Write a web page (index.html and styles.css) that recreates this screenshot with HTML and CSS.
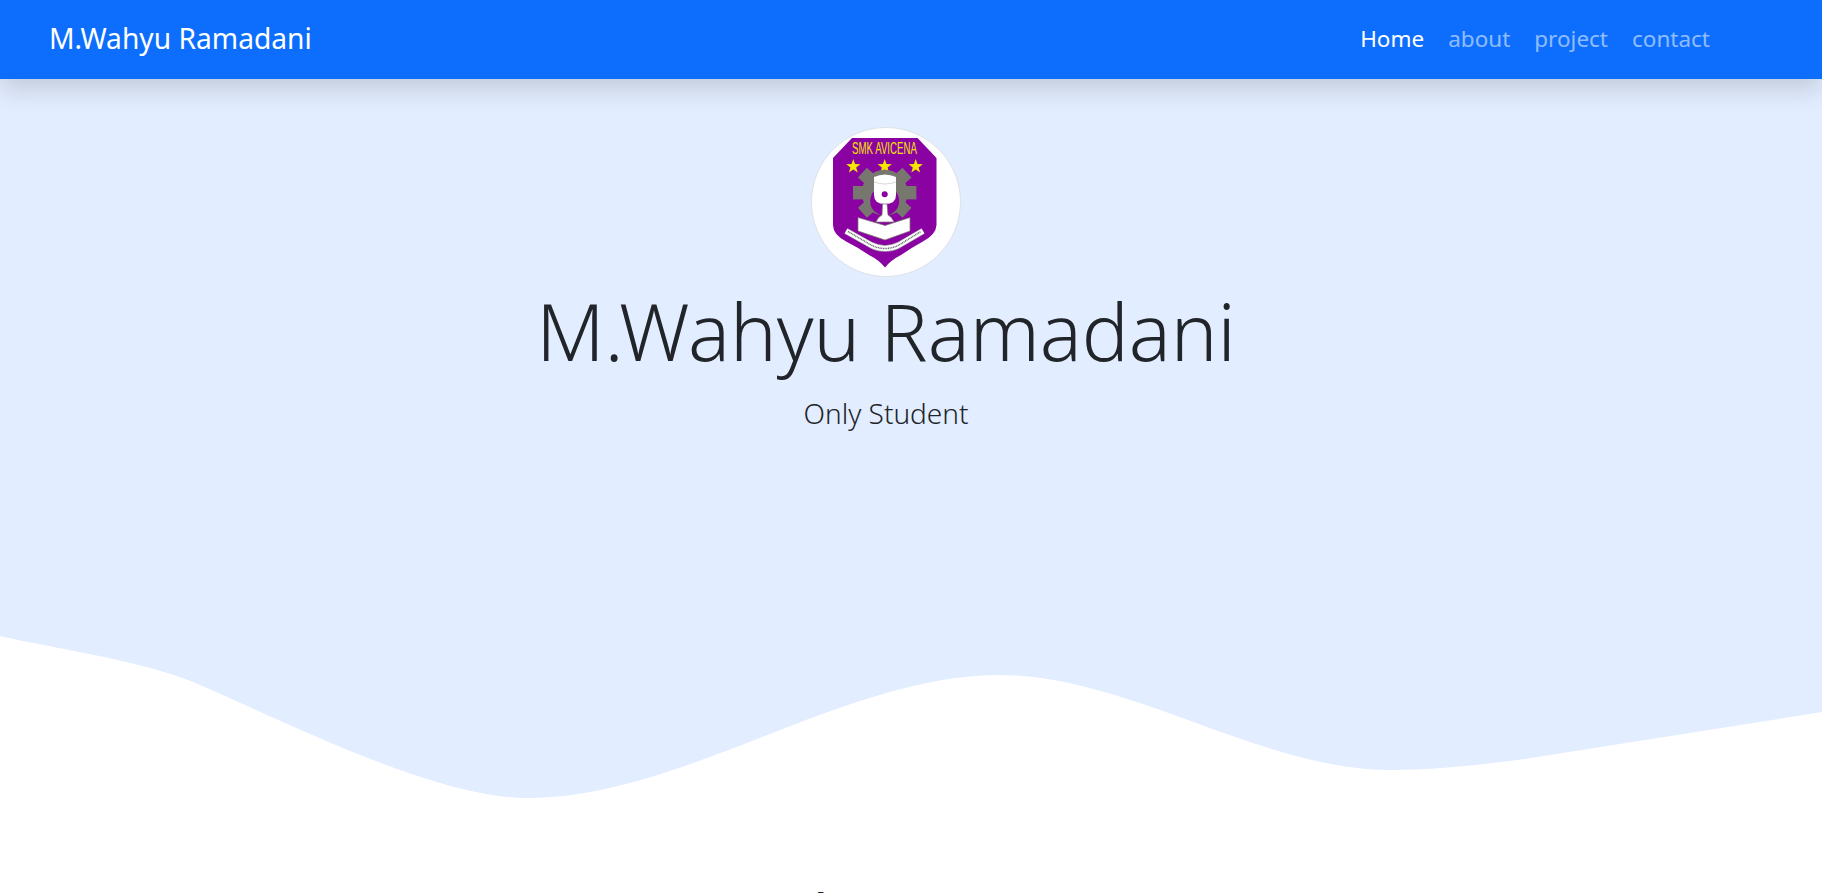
FILE: index.html
```html
<!DOCTYPE html>
<html lang="en">
<head>
    <meta charset="UTF-8">
    <meta name="viewport" content="width=device-width, initial-scale=1.0">
    <title>M.Wahyu Ramadani</title>
    <link rel="stylesheet" href="styles.css">
</head>
<body>
    <nav class="navbar">
        <a class="brand" href="#home">M.Wahyu Ramadani</a>
        <ul class="nav-links">
            <li><a class="active" href="#home">Home</a></li>
            <li><a href="#about">about</a></li>
            <li><a href="#project">project</a></li>
            <li><a href="#contact">contact</a></li>
        </ul>
    </nav>

    <section class="hero" id="home">
        <div class="hero-text">
            <svg class="logo" viewBox="0 0 150 150">
                <defs>
                    <polygon id="star" points="0,-7.500 1.760,-2.430 7.130,-2.320 2.850,.930 4.410,6.070 0,3 -4.410,6.070 -2.850,.930 -7.130,-2.320 -1.760,-2.430"/>
                </defs>
                <circle cx="75" cy="75" r="74.500" fill="#fff" stroke="#dee2e6"/>
                <!-- shield -->
                <path d="M41 11 H106.500 L125.500 31 V98 Q125 108 111 115 Q100 121 90 128 Q80 133 74 140.500 Q68 133 58 128 Q48 121 36 115 Q22 108 22 98 V31 Z" fill="#8a02a2"/>
                <text x="73.500" y="27" class="logo-name" textLength="65" lengthAdjust="spacingAndGlyphs">SMK AVICENA</text>
                <use href="#star" x="42.300" y="39.500" class="logo-star"/>
                <use href="#star" x="73.700" y="39.500" class="logo-star"/>
                <use href="#star" x="104.700" y="39.500" class="logo-star"/>
                <!-- gear -->
                <g fill="#77776f">
                    <circle cx="73.700" cy="65.700" r="23"/>
                    <rect x="42" y="59" width="63.400" height="13.400"/>
                    <rect x="43.700" y="59" width="60" height="13.400" transform="rotate(42 73.700 65.700)"/>
                    <rect x="43.700" y="59" width="60" height="13.400" transform="rotate(-42 73.700 65.700)"/>
                </g>
                <!-- piston -->
                <circle cx="73.700" cy="74" r="14.500" fill="#8a02a2"/>
                <path d="M63 50 Q74 45 85 50 V68 Q85 77 74 77 Q63 77 63 68 Z" fill="#fff"/>
                <path d="M63 55 Q74 59 85 55" fill="none" stroke="#d8d8d8"/>
                <circle cx="73.700" cy="67.300" r="3" fill="#8a02a2"/>
                <path d="M71.500 77 H76 L77 88 Q81 90 83 95 H65 Q67 90 71 88 Z" fill="#fff" stroke="#77776f" stroke-width=".7"/>
                <!-- book -->
                <path d="M47 90.500 L74 98.500 L99 90.500 V104 L74 113 L47 104 Z" fill="#fff" stroke="#77776f" stroke-width=".7"/>
                <!-- ribbon -->
                <path d="M35 104 L60 118 Q74 125 88 118 L112 104" fill="none" stroke="#a8a8a8" stroke-width="6.500"/>
                <path d="M35 104 L60 118 Q74 125 88 118 L112 104" fill="none" stroke="#fff" stroke-width="5"/>
                <path d="M37 104.500 L60 118 Q74 125 88 118 L110 104.500" fill="none" stroke="#666" stroke-width="1.500" stroke-dasharray="1 .7"/>
            </svg>
            <h1 class="hero-title">M.Wahyu Ramadani</h1>
            <p class="hero-sub">Only Student</p>
        </div>
        <svg class="wave" viewBox="0 0 1822 320" preserveAspectRatio="none">
            <path fill="#fff" d="M0,136 C58,149 116,156.400 174,175 C232,193.600 420,298 527,298 C684,298 843,175 1000,175 C1128,175 1262,270 1390,270 C1440,270 1500,263 1550,255 L1822,212 L1822,320 L0,320 Z"/>
        </svg>
    </section>

    <section class="about" id="about">
        <h2 class="about-title">About Me</h2>
    </section>
</body>
</html>
```

FILE: styles.css
```css
* {
    box-sizing: border-box;
}
html, body {
    overflow-x: hidden;
}
body {
    font-family: "Noto Sans", "Open Sans", sans-serif;
    margin: 0;
    padding: 0;
    background-color: #fff;
    color: #212529;
}
.navbar {
    position: relative;
    z-index: 2;
    display: flex;
    align-items: center;
    justify-content: space-between;
    height: 79px;
    padding: 0 112px 4px 49px;
    background-color: #0d6efd;
    box-shadow: 0 10px 24px rgba(0, 0, 0, 0.15);
}
.brand {
    color: #fff;
    font-size: 28.2px;
    text-decoration: none;
}
.nav-links {
    display: flex;
    gap: 24px;
    margin: 2px 0 0;
    padding: 0;
    list-style: none;
}
.nav-links a {
    color: rgba(255, 255, 255, 0.55);
    font-size: 22.5px;
    text-decoration: none;
}
.nav-links a.active {
    color: #fff;
}
.hero {
    background-color: #e2edff;
}
.hero-text {
    display: flex;
    flex-direction: column;
    align-items: center;
    padding: 48px 50px 0 0;
}
.logo {
    width: 150px;
    height: 150px;
}
.logo-name {
    fill: #f5e400;
    font-family: "Liberation Sans", sans-serif;
    font-size: 16px;
    text-anchor: middle;
}
.logo-star {
    fill: #f5e800;
}
.hero-title {
    margin: 7px 0 0;
    font-size: 78.4px;
    font-weight: 300;
    line-height: 1.2;
}
.hero-sub {
    margin: 18px 0 0;
    font-size: 28px;
    font-weight: 300;
    line-height: 34px;
}
.wave {
    display: block;
    width: 100%;
    height: 320px;
    margin-top: 70px;
}
.about {
    padding: 63px 50px 40px 0;
    text-align: center;
}
.about-title {
    margin: 0;
    font-size: 42px;
    font-weight: 600;
    line-height: 1.2;
}
```
